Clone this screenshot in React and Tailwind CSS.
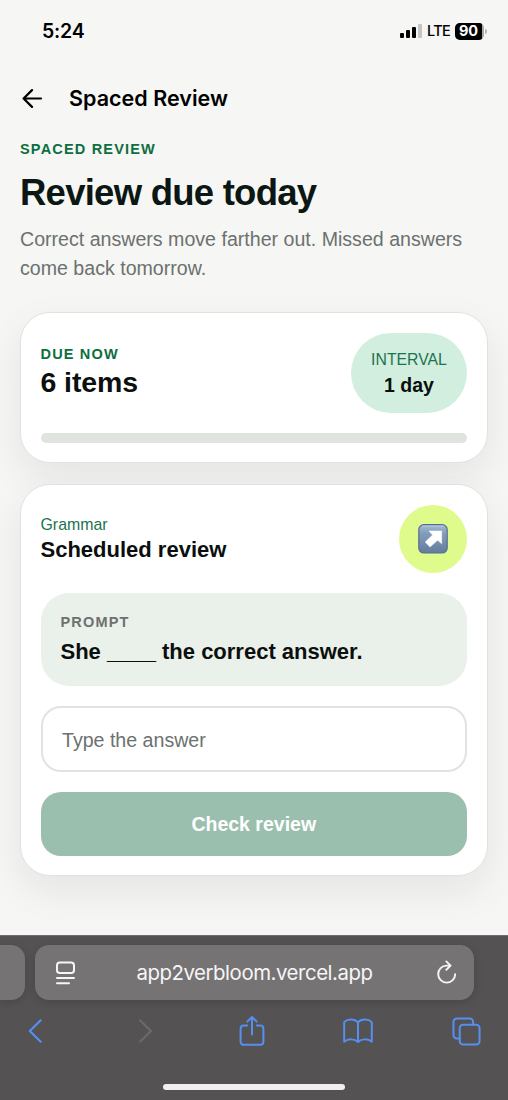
import { useState } from "react";

const BAR_HEIGHTS = ["h-[5px]", "h-[8px]", "h-[11px]", "h-[14px]"];

function StatusBar() {
  return (
    <div className="flex h-[62px] items-center justify-between pr-[23px] pl-[42px] font-['Inter',sans-serif] text-black">
      <span className="pt-[1px] text-[19.5px] leading-none font-semibold tracking-[-0.2px]">5:24</span>
      <div className="flex items-center">
        <div className="flex h-[14px] items-end gap-[2px]">
          {BAR_HEIGHTS.map((height, i) => (
            <span
              key={height}
              className={`w-[4px] rounded-[1px] ${height} ${i === 3 ? "bg-[#c4c4c3]" : "bg-black"}`}
            />
          ))}
        </div>
        <span className="ml-[5px] text-[14.5px] leading-none font-medium tracking-[-0.7px]">LTE</span>
        <div className="ml-[5px] flex h-[17px] w-[29px] items-center overflow-hidden rounded-[5px] bg-[#aaaaaa]">
          <span className="flex h-full w-[27px] items-center justify-center bg-black text-[14.5px] leading-none font-bold text-white">
            90
          </span>
        </div>
        <span className="-mr-[2px] ml-[1px] h-[5px] w-[2px] rounded-r-full bg-[#b5b5b5]" />
      </div>
    </div>
  );
}

function Eyebrow({ children, className = "text-[#0d6e41]" }) {
  return (
    <p className={`text-[14.5px] leading-[18px] font-bold tracking-[1.18px] uppercase ${className}`}>
      {children}
    </p>
  );
}

function Card({ children, className }) {
  return (
    <section
      className={`rounded-[30px] border border-[#e3e2e3] bg-white pr-[20px] pl-[19.5px] shadow-[0_15px_38px_rgba(20,30,25,0.08)] ${className}`}
    >
      {children}
    </section>
  );
}

// Glossy north-east arrow tile
function ArrowTile() {
  return (
    <svg width="30" height="30" viewBox="0 0 30 30">
      <defs>
        <linearGradient id="tile" x1="0" y1="0" x2="0" y2="1">
          <stop offset="0" stopColor="#a3bbd6" />
          <stop offset="0.3" stopColor="#849dbd" />
          <stop offset="1" stopColor="#637b9d" />
        </linearGradient>
      </defs>
      <rect x="0.8" y="0.6" width="28.4" height="28.4" rx="5" fill="url(#tile)" stroke="#576f90" strokeWidth="1.2" />
      <path d="M5 2.2h20" stroke="#b5c9e0" strokeWidth="1" strokeLinecap="round" />
      <path d="M11 7H23.7V19.8L19.7 16.2L12 23L7.2 18.1L14.6 11Z" fill="#fff" stroke="#fff" strokeWidth="0.5" strokeLinejoin="round" />
    </svg>
  );
}

function BrowserBar() {
  return (
    <footer className="flex h-[165px] flex-col border-t border-[#6f6e6e] bg-[#545253] font-['Inter',sans-serif]">
      <div className="mt-[9px] flex h-[55px] gap-[10px] overflow-visible">
        <div className="w-[25px] rounded-r-[14px] bg-[#757374] shadow-[0_2px_8px_rgba(0,0,0,0.15)]" />
        <div className="flex w-[439px] items-center justify-between rounded-[14px] bg-[#757374] pr-[16px] pl-[20px] text-[#f7f5f6] shadow-[0_2px_8px_rgba(0,0,0,0.15)]">
          <svg width="22" height="24" viewBox="0 0 22 24" fill="none" stroke="currentColor" strokeWidth="2" strokeLinecap="round">
            <rect x="2" y="1.6" width="17" height="10.5" rx="2.8" />
            <path d="M2 17H19M2 22.3H14" />
          </svg>
          <span className="pt-[1px] pr-[4px] text-[20.4px] leading-none tracking-[-0.45px]">app2verbloom.vercel.app</span>
          <svg width="22" height="26" viewBox="0 0 22 26" fill="none" stroke="currentColor" strokeWidth="1.9" strokeLinecap="round" strokeLinejoin="round">
            <path d="M13.6 5.6H10.6A8.5 8.5 0 1 0 19.2 14.1" />
            <path d="M10.3 1.4L14.6 5.6L10.3 9.8" />
          </svg>
        </div>
      </div>
      <div className="mt-[12px] flex h-[38px] items-center justify-between pr-[27px] pl-[27px] text-[#568ff0]">
        <svg width="18" height="26" viewBox="0 0 18 26" fill="none" stroke="currentColor" strokeWidth="2.2" strokeLinecap="round" strokeLinejoin="round">
          <path d="M13.7 2.3L2.8 13L13.7 23.7" />
        </svg>
        <svg className="ml-[14px] text-[#6b696a]" width="18" height="26" viewBox="0 0 18 26" fill="none" stroke="currentColor" strokeWidth="2.2" strokeLinecap="round" strokeLinejoin="round">
          <path d="M3 2.3L14 13L3 23.7" />
        </svg>
        <svg className="ml-[7px]" width="26" height="32" viewBox="0 0 26 32" fill="none" stroke="currentColor" strokeWidth="2" strokeLinecap="round" strokeLinejoin="round">
          <path d="M8.2 10.5H4.6A3 3 0 0 0 1.6 13.5V26.8A3 3 0 0 0 4.6 29.8H21.4A3 3 0 0 0 24.4 26.8V13.5A3 3 0 0 0 21.4 10.5H17.8" />
          <path d="M13 19.5V2M8.3 6.6L13 2L17.7 6.6" />
        </svg>
        <svg className="mr-[2px]" width="30" height="26" viewBox="0 0 30 26" fill="none" stroke="currentColor" strokeWidth="2" strokeLinecap="round" strokeLinejoin="round">
          <path d="M15 4.3C12 1 5 .4 1.2 4.1V23.7C5 20.5 11.5 20.6 15 24C18.5 20.6 25 20.5 28.8 23.7V4.1C25 .4 18 1 15 4.3ZM15 4.3V24" />
        </svg>
        <svg width="29" height="29" viewBox="0 0 30 30" fill="none" stroke="currentColor" strokeWidth="2.1" strokeLinecap="round" strokeLinejoin="round">
          <rect x="8" y="8" width="20.5" height="20.5" rx="3.5" />
          <path d="M8 22.2H5A3.5 3.5 0 0 1 1.5 18.7V5A3.5 3.5 0 0 1 5 1.5H18.3A3.5 3.5 0 0 1 21.8 5V8" />
        </svg>
      </div>
      <div className="mx-auto mt-[34px] h-[6px] w-[182px] rounded-full bg-[#f1eff0]" />
    </footer>
  );
}

export default function App() {
  const [answer, setAnswer] = useState("");

  return (
    <div className="flex h-[1100px] w-[508px] flex-col overflow-hidden bg-[#f6f6f4] font-['Liberation_Sans',Arial,sans-serif] text-[#0b0f0d]">
      <StatusBar />
      <header className="flex h-[73px] items-center pl-[22px] text-black">
        <svg width="22" height="20" viewBox="0 0 22 20" fill="none" stroke="currentColor" strokeWidth="2.2" strokeLinecap="round" strokeLinejoin="round">
          <path d="M19 9.5H1.6M10 1.1L1.6 9.5L10 17.9" />
        </svg>
        <span className="ml-[25px] font-['Inter',sans-serif] text-[21.5px] leading-none font-semibold tracking-[0.02px]">
          Spaced Review
        </span>
      </header>

      <main className="flex grow flex-col px-[20px] pt-[5px]">
        <Eyebrow>Spaced Review</Eyebrow>
        <h1 className="mt-[13px] text-[36.5px] leading-[44px] font-bold tracking-[-0.75px] text-[#0b1712]">
          Review due today
        </h1>
        <p className="mt-[10px] text-[19.6px] leading-[29px] text-[#6c716f]">
          Correct answers move farther out. Missed answers come back tomorrow.
        </p>

        <Card className="mt-[29px] h-[151px] shrink-0 pt-[20px]">
          <div className="flex h-[80px] items-center justify-between">
            <div>
              <Eyebrow>Due now</Eyebrow>
              <p className="mt-[1px] pb-[1px] text-[28.5px] leading-[36px] font-bold tracking-[-0.1px]">6 items</p>
            </div>
            <div className="flex h-full w-[116px] flex-col items-center justify-center rounded-full bg-[#d1eedf]">
              <span className="pt-[1px] text-[15.8px] leading-[22px] text-[#1d7350]">INTERVAL</span>
              <span className="text-[19.5px] leading-[28px] font-bold">1 day</span>
            </div>
          </div>
          <div className="mt-[20px] h-[10px] rounded-full bg-[#dfe5de]" />
        </Card>

        <Card className="mt-[21px] h-[392px] shrink-0 pt-[20px]">
          <div className="flex h-[68px] items-center justify-between">
            <div>
              <p className="text-[15.9px] leading-[22px] text-[#1d7350]">Grammar</p>
              <p className="pb-[1px] text-[22px] leading-[28px] font-bold">Scheduled review</p>
            </div>
            <div className="flex size-[68px] items-center justify-center rounded-full bg-[#dffb8b]">
              <ArrowTile />
            </div>
          </div>
          <div className="mt-[20px] h-[93px] rounded-[28px] bg-[#eaf0ea] px-[20px] pt-[20px]">
            <Eyebrow className="text-[#6c716f]">Prompt</Eyebrow>
            <p className="mt-[7px] text-[22px] leading-[28px] font-bold">She ____ the correct answer.</p>
          </div>
          <input
            value={answer}
            onChange={(e) => setAnswer(e.target.value)}
            placeholder="Type the answer"
            className="mt-[20px] block h-[66px] w-full rounded-[20px] border-2 border-[#e4e1e5] bg-white px-[19.5px] pt-[2px] text-[19.6px] outline-none placeholder:text-[#6c716f]"
          />
          <button className="mt-[20px] block h-[64px] w-full rounded-[20px] bg-[#9bbfaf] pt-[2px] text-[19.5px] font-bold text-white">
            Check review
          </button>
        </Card>
      </main>

      <BrowserBar />
    </div>
  );
}
